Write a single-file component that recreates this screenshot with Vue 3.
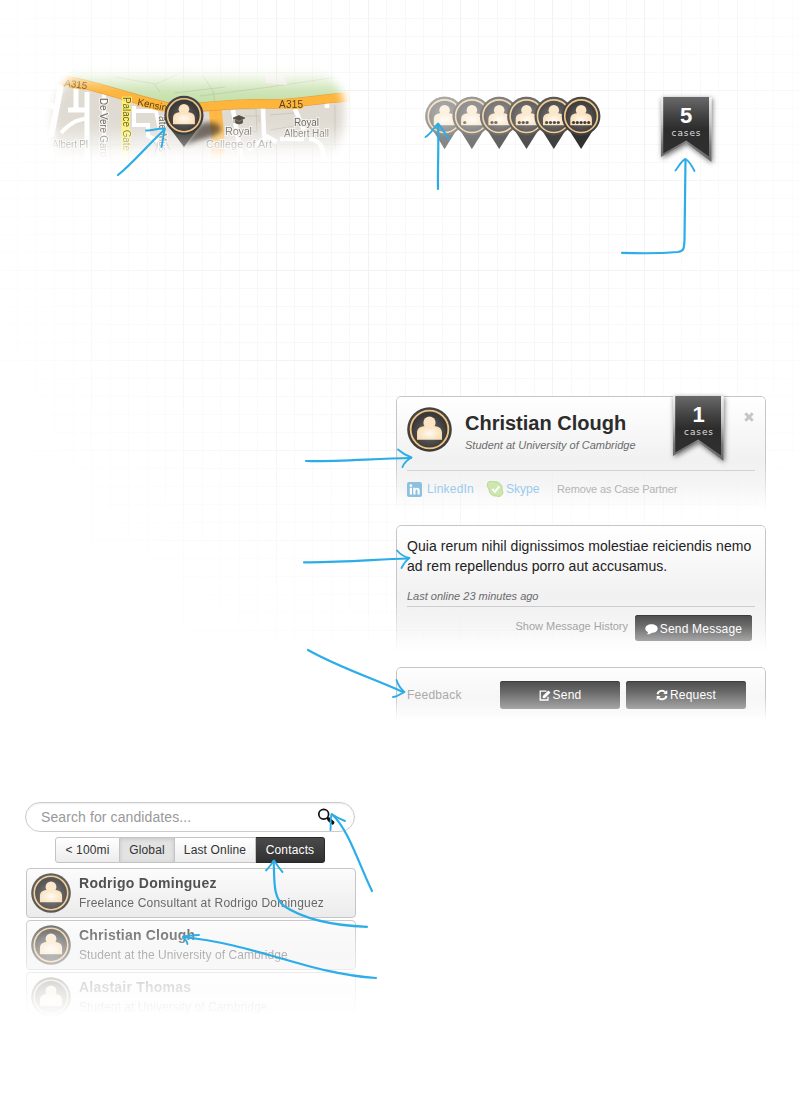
<script setup>
const pins = [0, 1, 2, 3, 4, 5].map((n) => ({
  n,
  cx: 444.6 + n * 27.3,
  fade: [0.55, 0.46, 0.33, 0.22, 0.12, 0.03][n],
}))

const filters = [
  { label: '< 100mi', cls: 'near' },
  { label: 'Global', cls: 'global' },
  { label: 'Last Online', cls: 'online' },
  { label: 'Contacts', cls: 'contacts' },
]

const candidates = [
  { name: 'Rodrigo Dominguez', role: 'Freelance Consultant at Rodrigo Dominguez' },
  { name: 'Christian Clough', role: 'Student at the University of Cambridge' },
  { name: 'Alastair Thomas', role: 'Student at University of Cambridge' },
]

const arrows = [
  { line: 'M118 175 C132 164 145 148 164 130', head: 'M146 130.500 C152 131 158 128 165 128.500 C163 135 163 141 161.500 147' },
  { line: 'M438 189 C437.500 170 439 145 438 124', head: 'M425.500 137 C431 134 435 126 438 123.500 C442 128 446 135 449 139.500' },
  { line: 'M622 252.800 C640 253.500 660 253.500 678 252 C684 251 684 249 684.500 240 C685 215 685 185 685.500 159.500', head: 'M675.500 170.500 C679 166 682 160 685.500 159 C689 161 692 166 694.500 171' },
  { line: 'M306 461 C340 461.500 375 458.500 411 458', head: 'M398 449.500 C402 453 407 456 411.500 457.500 C407 460 404 463 402.500 467' },
  { line: 'M304 562.300 C340 562.800 375 559.500 408 558.500', head: 'M397 550.500 C400 554 405 557 409.500 558 C405 561 403 565 401.500 568' },
  { line: 'M308 650 C338 667 372 678 403 692', head: 'M396.500 680 C398 685 401 689 404.500 692 C400 694 397 697 393 697' },
  { line: 'M372 891 C360 867 348 828 332 814.500', head: 'M345 821 C340 819 336 817 331.500 814 C330 820 331 825 330.500 830' },
  { line: 'M367 926.800 C318 925 296 914 284 906 C272 897 275 878 273.500 861', head: 'M266 870.500 C269 868 272 863 274 860.500 C277 865 279 868 282.500 872' },
  { line: 'M376 978 C310 974 255 944 183 937', head: 'M199 935 C193 935 188 936 183 936.500 C185 939 187 941 187.500 944' },
]
</script>

<template>
  <div class="page">
    <div class="grid"></div>

    <svg class="defs" width="0" height="0">
      <defs>
        <radialGradient id="body" cx=".5" cy=".6" r=".6">
          <stop offset="0" stop-color="#fffaf2" />
          <stop offset="1" stop-color="#f8d9ab" />
        </radialGradient>
        <radialGradient id="disc" cx=".5" cy=".55" r=".5">
          <stop offset="0" stop-color="#6f6d6c" />
          <stop offset=".8" stop-color="#393737" />
          <stop offset="1" stop-color="#444" />
        </radialGradient>
        <linearGradient id="ribbon" x1="0" y1="0" x2="0" y2="1">
          <stop offset="0" stop-color="#696969" />
          <stop offset=".35" stop-color="#3f3f3f" />
          <stop offset=".55" stop-color="#2c2c2c" />
          <stop offset="1" stop-color="#303030" />
        </linearGradient>
        <linearGradient id="trim" x1="0" y1="0" x2="0" y2="1">
          <stop offset="0" stop-color="#f2f2f2" />
          <stop offset=".4" stop-color="#c4c4c4" />
          <stop offset=".75" stop-color="#777" />
          <stop offset="1" stop-color="#666" />
        </linearGradient>
        <filter id="shadow" x="-30%" y="-20%" width="160%" height="150%">
          <feDropShadow dx="1" dy="1.500" stdDeviation="2.500" flood-color="#000" flood-opacity=".55" />
        </filter>
        <symbol id="person" viewBox="-24 -24 48 48" overflow="visible">
          <circle r="23.800" fill="url(#disc)" />
          <circle r="20.100" fill="none" stroke="#f0c583" stroke-width="2" />
          <path d="M-13.300 11V3.500C-13.300-.5-11-2.500-7.500-3.300L-4-4V-6H4V-4L7.500-3.300C11-2.500 13.300-.5 13.300 3.500V11Z" fill="url(#body)" />
          <circle cy="-7.300" r="6.500" fill="#fbe4c3" />
        </symbol>
        <symbol id="flag" viewBox="0 0 51 65" overflow="visible">
          <path d="M0 0V60L25.200 46L50.500 65V0Z" fill="url(#trim)" filter="url(#shadow)" />
          <path d="M2.200 0V56.500L25.200 43.500L48 59.500V0Z" fill="url(#ribbon)" />
        </symbol>
      </defs>
    </svg>

    <header class="showcase">
      <svg class="map" viewBox="40 60 320 110" width="320" height="110">
        <defs>
          <filter id="smear"><feGaussianBlur stdDeviation="2.500" /></filter>
          <linearGradient id="vfade" x1="0" y1="0" x2="0" y2="1">
            <stop offset="0" stop-color="#fff" stop-opacity="0" />
            <stop offset=".22" stop-color="#fff" />
            <stop offset=".6" stop-color="#fff" />
            <stop offset=".97" stop-color="#fff" stop-opacity="0" />
          </linearGradient>
          <filter id="edge"><feGaussianBlur stdDeviation="4.500" /></filter>
          <mask id="mapmask" maskUnits="userSpaceOnUse" x="40" y="60" width="320" height="110">
            <path d="M78 70H322C338 84 345 92 344 110C345 130 342 147 325 160H65C53 145 52 125 54 108C58 94 66 80 78 70Z" fill="url(#vfade)" filter="url(#edge)" />
          </mask>
          <linearGradient id="park" x1="0" y1="0" x2="0" y2="1">
            <stop offset="0" stop-color="#e4f0d6" />
            <stop offset="1" stop-color="#c3dfa7" />
          </linearGradient>
          <linearGradient id="mappin" x1="0" y1="0" x2="0" y2="1">
            <stop offset="0" stop-color="#333" />
            <stop offset="1" stop-color="#858585" />
          </linearGradient>
        </defs>
        <g mask="url(#mapmask)">
          <rect x="40" y="60" width="320" height="110" fill="#dfdbd3" />
          <path d="M40 60H360V98L220 104L170 105L60 80L40 75Z" fill="url(#park)" />
          <path d="M115 77L156 84L196 66M154 84L160 92M203 76L213 91L215 102M200 96L270 87L350 75M174 93L225 87" fill="none" stroke="#bac9a8" stroke-width=".8" />
          <path d="M265 74L284 76L287 85L266 83Z" fill="#eee9e2" />
          <g fill="none" stroke="#fff">
            <path d="M61 85L51 137M44 104L56 107" stroke-width="6" />
            <path d="M76 88V111M68 110H86M87 92V160" stroke-width="5" />
            <path d="M87 118L76 121C69 125 65 128 61 133" stroke-width="4" />
            <path d="M104 94V160M134 106V125H148V136L158 141M134 111H156L160 130" stroke-width="4" />
            <path d="M233 110L242 160M263 107L264 135L277 142M267 137L248 150M295 109L304 130M309 139C319 140 325 147 323 160M327 99V108M304 139L280 139" stroke-width="4.500" />
          </g>
          <path d="M225 109H256L257 132L242 129M245 116H259V122M270 115L294 113M270 130L300 125M335 105V150" fill="none" stroke="#c8c2b3" stroke-width=".8" />
          <path d="M126 92L125 160" stroke="#fff16e" stroke-width="8" fill="none" />
          <path d="M215 106L218 140L217 165" stroke="#fdb846" stroke-width="13" fill="none" />
          <path d="M58 79C90 83 127 98 168 107C205 110 220 102 275 104C305 103 332 97 350 97" stroke="#e79b39" stroke-width="9.500" fill="none" />
          <path d="M58 79C90 83 127 98 168 107C205 110 220 102 275 104C305 103 332 97 350 97" stroke="#fdb53b" stroke-width="8.300" fill="none" />
          <path d="M152 140L167 158M159 139L154 157M164 138L170 150" stroke="#999" stroke-width="1" />
          <g class="label">
            <text x="64" y="86" textLength="23" transform="rotate(8 64 86)" class="road">A315</text>
            <text x="137" y="105" textLength="30" transform="rotate(12 137 105)" class="road">Kensin</text>
            <text x="100" y="98" textLength="59" transform="rotate(90 100 98)">De Vere Gard</text>
            <text x="123" y="97" textLength="54" transform="rotate(90 123 97)" class="yellow">Palace Gate</text>
            <text x="159" y="116" textLength="36" transform="rotate(90 159 116)">ate Mus</text>
            <text x="52" y="148" textLength="36">Albert Pl</text>
            <text x="279" y="108" textLength="24" class="road">A315</text>
            <text x="294" y="126" textLength="25">Royal</text>
            <text x="284" y="137" textLength="45">Albert Hall</text>
            <text x="225" y="135" textLength="27" class="big">Royal</text>
            <text x="206" y="148" textLength="66" class="big">College of Art</text>
          </g>
          <path d="M233 118L239 115.500L245 118L239 121ZM235.500 120V123Q239 125 242.500 123V120L239 122ZM234 118V123" fill="#554d43" stroke="#554d43" stroke-width=".7" />
        </g>
        <path d="M184 146L199 125C211 119 222 124 221 130C218 138 199 138 184 146Z" fill="#342b20" opacity=".65" filter="url(#smear)" />
        <path d="M169 127L184 147L199 127Z" fill="url(#mappin)" />
        <use href="#person" x="164.200" y="95.500" width="39.500" height="39.500" />
      </svg>

      <svg class="pins" viewBox="420 92 190 62" width="190" height="62">
        <defs>
          <linearGradient id="haze" x1="0" y1="0" x2="0" y2="1">
            <stop offset="0" stop-color="#fff" />
            <stop offset="1" stop-color="#fff" stop-opacity=".75" />
          </linearGradient>
        </defs>
        <g v-for="p in pins" :key="p.n">
          <path :d="`M${p.cx - 12} 130L${p.cx} 149L${p.cx + 12} 130Z`" fill="#2d2c2c" />
          <use href="#person" :x="p.cx - 19.5" y="96.700" width="39" height="39" />
          <circle v-for="d in p.n" :key="d" :cx="p.cx - (p.n === 5 ? 7.6 : 7.2) + (d - 1) * (p.n === 5 ? 3.8 : 3.9)" cy="122.500" r="1.600" fill="#413328" />
          <path :d="`M${p.cx - 15} 128.500A19.400 19.400 0 1 1 ${p.cx + 15} 128.500L${p.cx} 149Z`" fill="url(#haze)" :opacity="p.fade" />
        </g>
      </svg>

      <div class="ribbon">
        <svg width="51" height="65"><use href="#flag" width="51" height="65" /></svg>
        <div class="count"><b>5</b><span>cases</span></div>
      </div>
    </header>

    <main class="cards">
      <section class="card profile">
        <div class="person-row">
          <svg class="avatar" width="45" height="45"><use href="#person" width="45" height="45" /></svg>
          <div class="who">
            <h1>Christian Clough</h1>
            <em>Student at University of Cambridge</em>
          </div>
          <div class="ribbon">
            <svg width="51" height="65"><use href="#flag" width="51" height="65" /></svg>
            <div class="count"><b>1</b><span>cases</span></div>
          </div>
          <svg class="close" width="10" height="10" viewBox="0 0 10 10"><path d="M1.300 1.300L8.700 8.700M8.700 1.300L1.300 8.700" stroke="#c6c6c6" stroke-width="3" /></svg>
        </div>
        <div class="links">
          <svg width="15" height="15" viewBox="0 0 15 15">
            <rect width="15" height="15" rx="2" fill="#8bc0de" />
            <g fill="#fff"><circle cx="3.900" cy="3.600" r="1.300" /><path d="M2.800 5.800H5V12.500H2.800ZM6.300 5.800H8.400V6.800C9.600 5.100 12.700 5.400 12.700 8.500V12.500H10.500V9C10.500 7 8.500 7.100 8.500 9V12.500H6.300Z" /></g>
          </svg>
          <a class="linkedin">LinkedIn</a>
          <svg width="17" height="16" viewBox="0 0 17 16">
            <path d="M1 1.500C3-.5 6 .2 7 .8C12 .2 16 4.500 15 9C18 14 12 16.500 10 15C5 15.500 2 12 2 8C0 6 0 3 1 1.500Z" fill="#cde7ae" stroke="#b1d48b" stroke-width=".9" />
            <path d="M5.300 8L8 10.700L12.300 5.300" fill="none" stroke="#fff" stroke-width="2" />
          </svg>
          <a class="skype">Skype</a>
          <a class="remove">Remove as Case Partner</a>
        </div>
      </section>

      <section class="card message">
        <p>Quia rerum nihil dignissimos molestiae reiciendis nemo<br />ad rem repellendus porro aut accusamus.</p>
        <em>Last online 23 minutes ago</em>
        <div class="message-actions">
          <a>Show Message History</a>
          <button class="dark send-message">
            <svg width="13" height="12" viewBox="0 0 13 12"><path d="M6.500 1.200C10 1.200 12.700 3 12.700 5.500C12.700 8.300 9.800 10 6.500 9.900C5.300 10.800 3.500 11.500 2 11.200C2.800 10.500 3.100 9.700 3 9C1.300 8.300.3 7.200.3 5.500C.3 3 3 1.200 6.500 1.200Z" fill="#fff" /></svg>
            Send Message
          </button>
        </div>
      </section>

      <section class="card feedback">
        <span>Feedback</span>
        <button class="dark">
          <svg width="12" height="11" viewBox="0 0 12 11"><path d="M7.500 1.200H1.200V10H9V6.800" fill="none" stroke="#fff" stroke-width="1.300" /><path d="M3.800 8V5.900L9.300.4L11.500 2.600L6 8Z" fill="#fff" /></svg>
          Send
        </button>
        <button class="dark">
          <svg width="12" height="12" viewBox="0 0 12 12"><path d="M1.500 5.200C2.200 1.500 7 .6 9.200 3.200M10.500 6.800C9.800 10.500 5 11.400 2.800 8.800" fill="none" stroke="#fff" stroke-width="1.900" /><path d="M11.300 1V5.100H7.200ZM.7 11V6.900H4.800Z" fill="#fff" /></svg>
          Request
        </button>
      </section>
    </main>

    <section class="finder">
      <div class="search">
        <span>Search for candidates...</span>
        <svg width="19" height="18" viewBox="0 0 19 18"><circle cx="6.700" cy="6.300" r="4.900" fill="none" stroke="#111" stroke-width="1.700" /><path d="M10.300 9.800L12 11.400" stroke="#111" stroke-width="2" /><path d="M12 11.300L15.500 14.700" stroke="#111" stroke-width="3.800" stroke-linecap="round" /></svg>
      </div>
      <div class="filters">
        <button v-for="f in filters" :key="f.label" :class="f.cls">{{ f.label }}</button>
      </div>
      <ul>
        <li v-for="c in candidates" :key="c.name">
          <svg width="40" height="40"><use href="#person" width="40" height="40" /></svg>
          <div>
            <strong>{{ c.name }}</strong>
            <span>{{ c.role }}</span>
          </div>
        </li>
      </ul>
    </section>

    <svg class="arrows" width="800" height="1100" viewBox="0 0 800 1100">
      <g v-for="(a, i) in arrows" :key="i">
        <path :d="a.line" />
        <path :d="a.head" class="head" />
      </g>
    </svg>
  </div>
</template>

<style>
body {
  background: #fff;
}
</style>

<style scoped>
.page {
  position: relative;
  z-index: 0;
  box-sizing: border-box;
  width: 800px;
  height: 1100px;
  overflow: hidden;
  font: 12px/16px "Liberation Sans", Arial, sans-serif;
  color: #333;
}
.grid {
  position: absolute;
  z-index: -1;
  inset: 0 0 auto;
  height: 640px;
  background:
    repeating-linear-gradient(90deg, transparent 0 91.2px, #f2f2f2 91.2px 92.2px),
    repeating-linear-gradient(180deg, transparent 0 89px, #f2f2f2 89px 90px),
    repeating-linear-gradient(90deg, transparent 0 17.44px, #f8f8f8 17.44px 18.44px),
    repeating-linear-gradient(180deg, transparent 0 17px, #f8f8f8 17px 18px);
  background-position: 0 0, 0 1px, 0 0, 0 1px;
  mask-image: radial-gradient(ellipse 520px 620px at 430px 130px, #000 40%, transparent 100%);
}
.defs {
  position: absolute;
}
.showcase {
  display: flex;
  align-items: flex-start;
  height: 336px;
  padding: 60px 0 0 40px;
}
.map {
  flex: none;
}
.label {
  font-size: 10px;
  fill: #6b655c;
  paint-order: stroke;
  stroke: #f4f2ee;
  stroke-width: 2px;
}
.label .road {
  fill: #5c421a;
  stroke: #fdb53b;
}
.label .yellow {
  fill: #635e38;
  stroke: #fff16e;
}
.label .big {
  font-size: 11px;
}
.pins {
  flex: none;
  margin: 32px 0 0 60px;
}
.ribbon {
  display: grid;
  width: 51px;
  height: 65px;
  flex: none;
}
.ribbon > * {
  grid-area: 1 / 1;
  overflow: visible;
}
.showcase .ribbon {
  margin: 37px 0 0 51px;
}
.count {
  z-index: 1;
  text-align: center;
  color: #fff;
}
.count b {
  display: block;
  margin-top: 7px;
  font-size: 22px;
  line-height: 24px;
}
.count span {
  display: block;
  margin-top: -1px;
  padding-left: 1px;
  font: 9px/12px "DejaVu Sans", sans-serif;
  letter-spacing: 0.9px;
  color: #ddd;
}
.showcase .count b,
.showcase .count span {
  position: relative;
  left: -0.5px;
}
.cards {
  display: flex;
  flex-direction: column;
  width: 370px;
  margin-left: 396px;
}
.card {
  position: relative;
  box-sizing: border-box;
  padding: 0 11px;
}
.card::before {
  content: "";
  position: absolute;
  z-index: 0;
  inset: 0;
  border: 1px solid #c6c6c6;
  border-bottom: 0;
  border-radius: 5px 5px 0 0;
  background: linear-gradient(#fff, #ebebeb 80%, #ebebeb);
  mask-image: linear-gradient(#000 55%, transparent);
}
.card > * {
  position: relative;
}
.profile {
  height: 114px;
}
.person-row {
  display: flex;
  align-items: flex-start;
  height: 74px;
  border-bottom: 1px solid #d2d2d2;
  width: 348px;
}
.avatar {
  flex: none;
  margin-top: 11px;
}
.who {
  width: 208px;
  margin-left: 13px;
}
h1 {
  margin: 15px 0 0;
  font-size: 20px;
  line-height: 24px;
  color: #2c2c2c;
}
em {
  display: block;
  font-size: 11px;
  line-height: 14px;
  color: #6b6b6b;
}
.who em {
  margin-top: 3px;
}
.close {
  margin: 16px 0 0 20px;
}
.links {
  display: flex;
  align-items: center;
  height: 36px;
}
.links svg {
  flex: none;
}
.links a {
  letter-spacing: 0.2px;
  color: #9acbee;
  white-space: nowrap;
}
.links .linkedin {
  width: 60px;
  margin-left: 5px;
}
.links .skype {
  width: 51px;
  margin-left: 2px;
  letter-spacing: 0;
}
.links .remove {
  font-size: 11px;
  letter-spacing: -0.15px;
  color: #b5b5b5;
}
.message {
  height: 127px;
  margin-top: 15px;
}
.message p {
  margin: 0;
  padding-top: 11px;
  font-size: 14px;
  line-height: 20px;
  letter-spacing: 0.05px;
  color: #222;
  white-space: nowrap;
}
.message em {
  width: 348px;
  height: 17px;
  margin-top: 13px;
  border-bottom: 1px solid #ccc;
}
.message-actions {
  display: flex;
  align-items: flex-start;
  justify-content: flex-end;
  gap: 7px;
  padding: 8px 3px 0 0;
}
.message-actions a {
  margin-top: 3px;
  font-size: 11px;
  color: #a5a5a5;
}
.dark {
  display: flex;
  box-sizing: border-box;
  align-items: center;
  justify-content: center;
  gap: 2px;
  width: 120px;
  height: 28px;
  padding: 0;
  border: 0;
  border-radius: 3px;
  background: linear-gradient(#4d4d4d, #6a6a6a 40%, #a6a6a6);
  box-shadow: inset 0 1px #3d3d3d;
  color: #fff;
  font: 12px/16px "Liberation Sans", Arial, sans-serif;
  letter-spacing: 0.2px;
  white-space: nowrap;
}
.send-message {
  width: 117px;
  height: 26px;
  padding-top: 1px;
}
.feedback {
  display: flex;
  align-items: flex-start;
  height: 53px;
  margin-top: 15px;
  padding-top: 14px;
}
.feedback::before {
  background: linear-gradient(#fefefe, #f0f0f0);
}
.feedback span {
  width: 93px;
  padding-top: 6px;
  letter-spacing: 0.25px;
  color: #aaa;
}
.feedback button + button {
  margin-left: 6px;
}
.finder {
  width: 330px;
  margin: 82px 0 0 25px;
}
.search {
  display: flex;
  box-sizing: border-box;
  justify-content: space-between;
  height: 30px;
  padding: 5px 18px 0 15px;
  border: 1px solid #ccc;
  border-radius: 15px;
  box-shadow: inset 0 1px 2px #eee;
  font-size: 14px;
  line-height: 19px;
  letter-spacing: 0.1px;
  color: #999;
}
.filters {
  display: flex;
  width: 270px;
  margin: 5px 0 0 30px;
}
.filters button {
  box-sizing: border-box;
  height: 26px;
  padding: 0;
  border: 1px solid #c4c4c4;
  border-left-width: 0;
  background: linear-gradient(#fff, #ececec);
  color: #333;
  font: 12px/24px "Liberation Sans", Arial, sans-serif;
  letter-spacing: 0.15px;
}
.filters .near {
  width: 65px;
  border-left-width: 1px;
  border-radius: 3px 0 0 3px;
}
.filters .global {
  width: 55px;
  background: #e3e3e3;
  box-shadow: inset 0 1px 4px #c4c4c4;
}
.filters .online {
  width: 81px;
}
.filters .contacts {
  width: 69px;
  border-color: #292929;
  border-radius: 0 3px 3px 0;
  background: linear-gradient(#4a4a4a, #303030);
  color: #fff;
}
ul {
  display: flex;
  flex-direction: column;
  gap: 2px;
  width: 330px;
  height: 150px;
  margin: 5px 0 0 1px;
  padding: 0;
  overflow: hidden;
  list-style: none;
  mask-image: linear-gradient(rgba(0, 0, 0, 0.85) 0, rgba(0, 0, 0, 0.85) 32%, rgba(0, 0, 0, 0.6) 46%, rgba(0, 0, 0, 0.36) 63%, rgba(0, 0, 0, 0.17) 78%, transparent);
}
li {
  display: flex;
  box-sizing: border-box;
  flex: none;
  height: 50px;
  padding: 4px;
  border: 1px solid #bbb;
  border-radius: 4px;
  background: linear-gradient(#fbfbfb, #e8e8e8);
}
li svg {
  flex: none;
}
li div {
  margin: 1px 0 0 8px;
}
li strong {
  display: block;
  font-size: 14px;
  line-height: 18px;
  letter-spacing: 0.28px;
}
li span {
  display: block;
  margin-top: 3px;
  line-height: 16px;
  letter-spacing: 0.2px;
  color: #4c4c4c;
  white-space: nowrap;
}
li + li strong {
  letter-spacing: 0.22px;
}
li + li span {
  letter-spacing: 0.07px;
}
.arrows {
  position: absolute;
  inset: 0;
  pointer-events: none;
}
.arrows path {
  fill: none;
  stroke: #2bade7;
  stroke-width: 2.2px;
  stroke-linecap: round;
  stroke-linejoin: round;
}
.arrows .head {
  stroke-width: 1.9px;
}
</style>
